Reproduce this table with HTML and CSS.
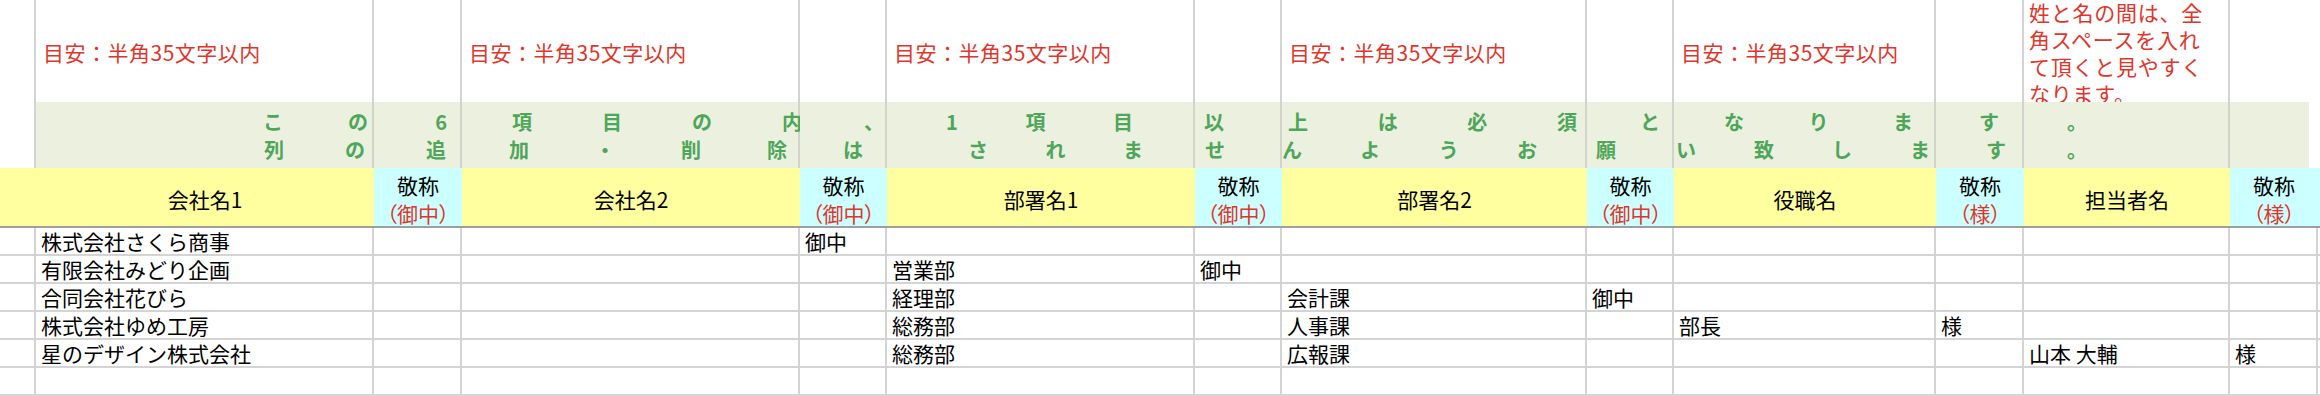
FILE: index.html
```html
<!DOCTYPE html>
<html lang="ja">
<head>
<meta charset="utf-8">
<title>宛名リスト</title>
<link rel="stylesheet" href="styles.css">
</head>
<body>
<div class="sheet">
  <!-- notes row -->
  <div class="row">
    <div class="c n"></div>
    <div class="c n">目安：半角35文字以内</div>
    <div class="c n"></div>
    <div class="c n">目安：半角35文字以内</div>
    <div class="c n"></div>
    <div class="c n">目安：半角35文字以内</div>
    <div class="c n"></div>
    <div class="c n">目安：半角35文字以内</div>
    <div class="c n"></div>
    <div class="c n">目安：半角35文字以内</div>
    <div class="c n"></div>
    <div class="c n memo">姓と名の間は、全<br>角スペースを入れ<br>て頂くと見やすく<br>なります。</div>
    <div class="c n last"></div>
    <div class="c fill"></div>
  </div>

  <!-- green instruction row -->
  <div class="row">
    <div class="c gw"></div>
    <div class="c g"><div class="gl g1a"><span>こ</span><span>の</span></div><div class="gl g1b"><span>列</span><span>の</span></div></div>
    <div class="c g"><div class="gl g2a"><span>6</span></div><div class="gl g2b"><span>追</span></div></div>
    <div class="c g"><div class="gl g3a"><span>項</span><span>目</span><span>の</span><span>内</span></div><div class="gl g3b"><span>加</span><span>・</span><span>削</span><span>除</span></div></div>
    <div class="c g"><div class="gl g4a"><span>、</span></div><div class="gl g4b"><span>は</span></div></div>
    <div class="c g"><div class="gl g5a"><span>1</span><span>項</span><span>目</span></div><div class="gl g5b"><span>さ</span><span>れ</span><span>ま</span></div></div>
    <div class="c g"><div class="gl g6a"><span>以</span></div><div class="gl g6b"><span>せ</span></div></div>
    <div class="c g"><div class="gl g7a"><span>上</span><span>は</span><span>必</span><span>須</span></div><div class="gl g7b"><span>ん</span><span>よ</span><span>う</span><span>お</span></div></div>
    <div class="c g"><div class="gl g8a"><span>と</span></div><div class="gl g8b"><span>願</span></div></div>
    <div class="c g"><div class="gl g9a"><span>な</span><span>り</span><span>ま</span></div><div class="gl g9b"><span>い</span><span>致</span><span>し</span><span>ま</span></div></div>
    <div class="c g"><div class="gl g10a"><span>す</span></div><div class="gl g10b"><span>す</span></div></div>
    <div class="c g"><div class="gl g11a"><span>。</span></div><div class="gl g11b"><span>。</span></div></div>
    <div class="c g glast"></div>
    <div class="c fill"></div>
  </div>

  <!-- header row -->
  <div class="row">
    <div class="c h hy"></div>
    <div class="c h hy">会社名1</div>
    <div class="c h hc"><span>敬称</span><span class="red hon">（御中）</span></div>
    <div class="c h hy">会社名2</div>
    <div class="c h hc"><span>敬称</span><span class="red hon">（御中）</span></div>
    <div class="c h hy">部署名1</div>
    <div class="c h hc"><span>敬称</span><span class="red hon">（御中）</span></div>
    <div class="c h hy">部署名2</div>
    <div class="c h hc"><span>敬称</span><span class="red hon">（御中）</span></div>
    <div class="c h hy">役職名</div>
    <div class="c h hc"><span>敬称</span><span class="red hon">（様）</span></div>
    <div class="c h hy">担当者名</div>
    <div class="c h hc"><span>敬称</span><span class="red hon">（様）</span></div>
    <div class="c h hc"></div>
  </div>

  <!-- data rows -->
  <div class="row">
    <div class="c d"></div><div class="c d">株式会社さくら商事</div><div class="c d"></div><div class="c d"></div><div class="c d">御中</div><div class="c d"></div><div class="c d"></div><div class="c d"></div><div class="c d"></div><div class="c d"></div><div class="c d"></div><div class="c d"></div><div class="c d"></div><div class="c d fill"></div>
  </div>
  <div class="row">
    <div class="c d"></div><div class="c d">有限会社みどり企画</div><div class="c d"></div><div class="c d"></div><div class="c d"></div><div class="c d">営業部</div><div class="c d">御中</div><div class="c d"></div><div class="c d"></div><div class="c d"></div><div class="c d"></div><div class="c d"></div><div class="c d"></div><div class="c d fill"></div>
  </div>
  <div class="row">
    <div class="c d"></div><div class="c d">合同会社花びら</div><div class="c d"></div><div class="c d"></div><div class="c d"></div><div class="c d">経理部</div><div class="c d"></div><div class="c d">会計課</div><div class="c d">御中</div><div class="c d"></div><div class="c d"></div><div class="c d"></div><div class="c d"></div><div class="c d fill"></div>
  </div>
  <div class="row">
    <div class="c d"></div><div class="c d">株式会社ゆめ工房</div><div class="c d"></div><div class="c d"></div><div class="c d"></div><div class="c d">総務部</div><div class="c d"></div><div class="c d">人事課</div><div class="c d"></div><div class="c d">部長</div><div class="c d">様</div><div class="c d"></div><div class="c d"></div><div class="c d fill"></div>
  </div>
  <div class="row">
    <div class="c d"></div><div class="c d">星のデザイン株式会社</div><div class="c d"></div><div class="c d"></div><div class="c d"></div><div class="c d">総務部</div><div class="c d"></div><div class="c d">広報課</div><div class="c d"></div><div class="c d"></div><div class="c d"></div><div class="c d">山本 大輔</div><div class="c d">様</div><div class="c d fill"></div>
  </div>
  <div class="row">
    <div class="c d"></div><div class="c d"></div><div class="c d"></div><div class="c d"></div><div class="c d"></div><div class="c d"></div><div class="c d"></div><div class="c d"></div><div class="c d"></div><div class="c d"></div><div class="c d"></div><div class="c d"></div><div class="c d"></div><div class="c d fill"></div>
  </div>
</div>
</body>
</html>
```
FILE: styles.css
```css
html, body {
  margin: 0;
  padding: 0;
  background: #ffffff;
}

body {
  font-family: "Noto Sans CJK JP", "Noto Sans", sans-serif;
  color: #000000;
  width: 2320px;
  height: 396px;
  overflow: hidden;
}

.sheet {
  display: grid;
  grid-template-columns: 36px 338px 88px 338px 87px 308px 87px 305px 87px 262px 88px 206px 88px 2px;
  grid-template-rows: 102px 66px 60px repeat(6, 28px);
  width: 2320px;
}

.row {
  display: contents;
}

.c {
  box-sizing: border-box;
  min-width: 0;
}

/* notes row */
.n {
  display: flex;
  align-items: center;
  padding: 3px 0 0 7px;
  border-right: 2px solid #d4d4d4;
  font-size: 21px;
  line-height: 27px;
  letter-spacing: 0.5px;
  color: #e0352b;
  white-space: nowrap;
  background: #ffffff;
}

.n.memo {
  padding-left: 5px;
  letter-spacing: 0.75px;
  position: relative;
  z-index: 1;
}

.n.last {
  border-right: none;
}

/* green instruction row */
.gw {
  background: #ffffff;
  border-right: 2px solid #d4d4d4;
}

.g {
  background: #ebf1de;
  border-right: 2px solid #d2d4cc;
  padding-top: 6px;
  font-size: 20px;
  font-weight: 700;
  color: #4ea65a;
  position: relative;
  z-index: 2;
}

.g.glast {
  border-right: none;
  background: linear-gradient(to right, #ebf1de 0, #ebf1de 79px, #ffffff 79px);
}

.gl {
  display: flex;
  justify-content: space-between;
  height: 28px;
  line-height: 28px;
  white-space: nowrap;
}

.g1a { padding: 0 4px 0 227px; }
.g1b { padding: 0 7px 0 228px; }
.g2a { justify-content: flex-end; padding-right: 13px; }
.g2b { justify-content: flex-end; padding-right: 14px; }
.g3a { padding-left: 50px; margin-right: -4px; }
.g3b { padding: 0 11px 0 47px; }
.g4a { justify-content: flex-end; padding-right: 1px; }
.g4b { justify-content: flex-start; padding-left: 43px; }
.g5a { padding: 0 60px 0 59px; }
.g5b { padding: 0 50px 0 81px; }
.g6a { justify-content: flex-start; padding-left: 9px; }
.g6b { justify-content: flex-start; padding-left: 10px; }
.g7a { padding: 0 8px 0 6px; }
.g7b { padding: 0 48px 0 0; }
.g8a { justify-content: flex-end; padding-right: 12px; }
.g8b { justify-content: flex-start; padding-left: 9px; }
.g9a { padding: 0 21px 0 50px; }
.g9b { padding: 0 4px 0 2px; }
.g10a { justify-content: flex-start; padding-left: 43px; }
.g10b { justify-content: flex-start; padding-left: 50px; }
.g11a { justify-content: flex-start; padding-left: 43px; }
.g11b { justify-content: flex-start; padding-left: 43px; }

/* header row */
.h {
  display: flex;
  flex-direction: column;
  align-items: center;
  justify-content: center;
  padding-top: 3px;
  font-size: 21px;
  line-height: 28px;
  border-bottom: 2px solid #9e9e9e;
  white-space: nowrap;
}

.hy {
  background: #ffff9f;
}

.hc {
  background: #ccffff;
}

.red {
  color: #e0352b;
}

.hon {
  font-feature-settings: "palt" 1;
}

/* data rows */
.d {
  display: flex;
  align-items: center;
  padding-left: 5px;
  font-size: 21px;
  line-height: 26px;
  border-right: 2px solid #d4d4d4;
  border-bottom: 2px solid #d4d4d4;
  white-space: nowrap;
  background: #ffffff;
}

.fill {
  border-right: none;
  background: #ffffff;
}

.d.fill {
  border-right: none;
}
```
